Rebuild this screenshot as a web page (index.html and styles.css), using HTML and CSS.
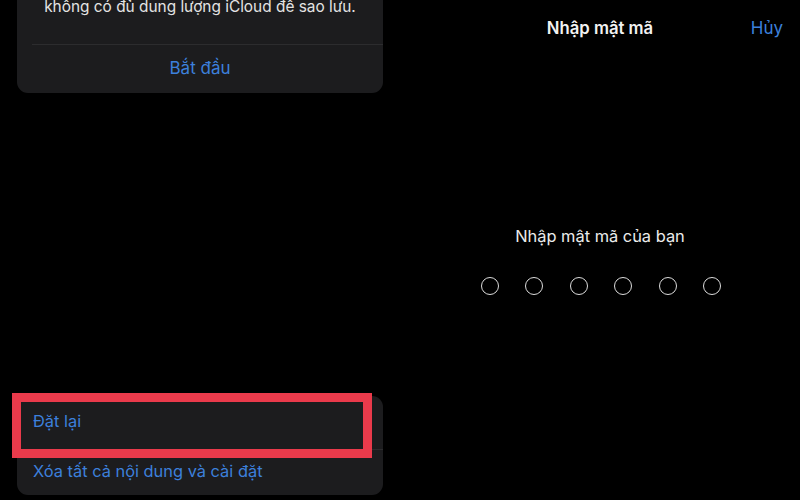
FILE: index.html
```html
<!DOCTYPE html>
<html lang="vi">
<head>
    <meta charset="UTF-8">
    <meta name="viewport" content="width=device-width, initial-scale=1.0">
    <title>Đặt lại</title>
    <link rel="stylesheet" href="styles.css">
</head>
<body>
    <div class="screen">
        <div class="pane left">
            <div class="card card-top">
                <p class="message">không có đủ dung lượng iCloud để sao lưu.</p>
                <div class="action">Bắt đầu</div>
            </div>

            <div class="card card-bottom">
                <div class="row">Đặt lại</div>
                <div class="row sep">Xóa tất cả nội dung và cài đặt</div>
                <div class="highlight"></div>
            </div>
        </div>

        <div class="pane right">
            <div class="nav">
                <span class="nav-title">Nhập mật mã</span>
                <span class="nav-cancel">Hủy</span>
            </div>
            <div class="prompt">Nhập mật mã của bạn</div>
            <div class="dots">
                <span class="dot"></span>
                <span class="dot"></span>
                <span class="dot"></span>
                <span class="dot"></span>
                <span class="dot"></span>
                <span class="dot"></span>
            </div>
        </div>
    </div>
</body>
</html>
```

FILE: styles.css
```css
html, body {
    margin: 0;
    padding: 0;
    background: #000;
}
body {
    font-family: Inter, "Noto Sans", sans-serif;
    color: #e6e6e6;
    width: 800px;
    height: 500px;
    overflow: hidden;
}
.screen {
    display: flex;
    height: 500px;
}
.pane {
    width: 400px;
    height: 500px;
    box-sizing: border-box;
}
.left {
    display: flex;
    flex-direction: column;
    padding: 0 17px;
}
.card {
    background: #1c1c1e;
    border-radius: 11px;
}
.card-top {
    margin-top: -13px;
    padding-top: 10px;
}
.message {
    margin: 0;
    padding: 0 10px 27px;
    text-align: center;
    font-size: 15.4px;
    line-height: 20px;
    color: #e3e3e3;
}
.action {
    margin-left: 15px;
    border-top: 1px solid #2c2c2e;
    height: 48px;
    line-height: 47px;
    padding-right: 15px;
    text-align: center;
    font-size: 17px;
    color: #3c80dc;
}
.card-bottom {
    position: relative;
    margin-top: auto;
    margin-bottom: 5px;
}
.row {
    height: 53px;
    line-height: 50px;
    padding-left: 16px;
    font-size: 16.4px;
    color: #3c80dc;
}
.row.sep {
    height: 45px;
    line-height: 42px;
    margin-left: 16px;
    padding-left: 0;
    border-top: 1px solid #2c2c2e;
}
.highlight {
    position: absolute;
    left: -5px;
    top: -3px;
    width: 342px;
    height: 47px;
    border: 9px solid #ea3a4b;
}
.right {
    display: flex;
    flex-direction: column;
    align-items: center;
    padding: 0 17px;
}
.nav {
    position: relative;
    width: 100%;
    height: 56px;
    line-height: 56px;
    text-align: center;
    font-size: 17px;
}
.nav-title {
    font-weight: 600;
    font-size: 16.7px;
    color: #f2f2f2;
}
.nav-cancel {
    position: absolute;
    right: 0;
    top: 0;
    color: #3c80dc;
}
.prompt {
    margin-top: 168px;
    font-size: 16.4px;
    line-height: 24px;
    color: #ececec;
}
.dots {
    display: flex;
    gap: 25.4px;
    margin-top: 29px;
    margin-left: 2px;
}
.dot {
    width: 16px;
    height: 16px;
    border: 1.6px solid #dcdcdc;
    border-radius: 50%;
}
.dots .dot + .dot {
    margin-left: 1px;
}
```
